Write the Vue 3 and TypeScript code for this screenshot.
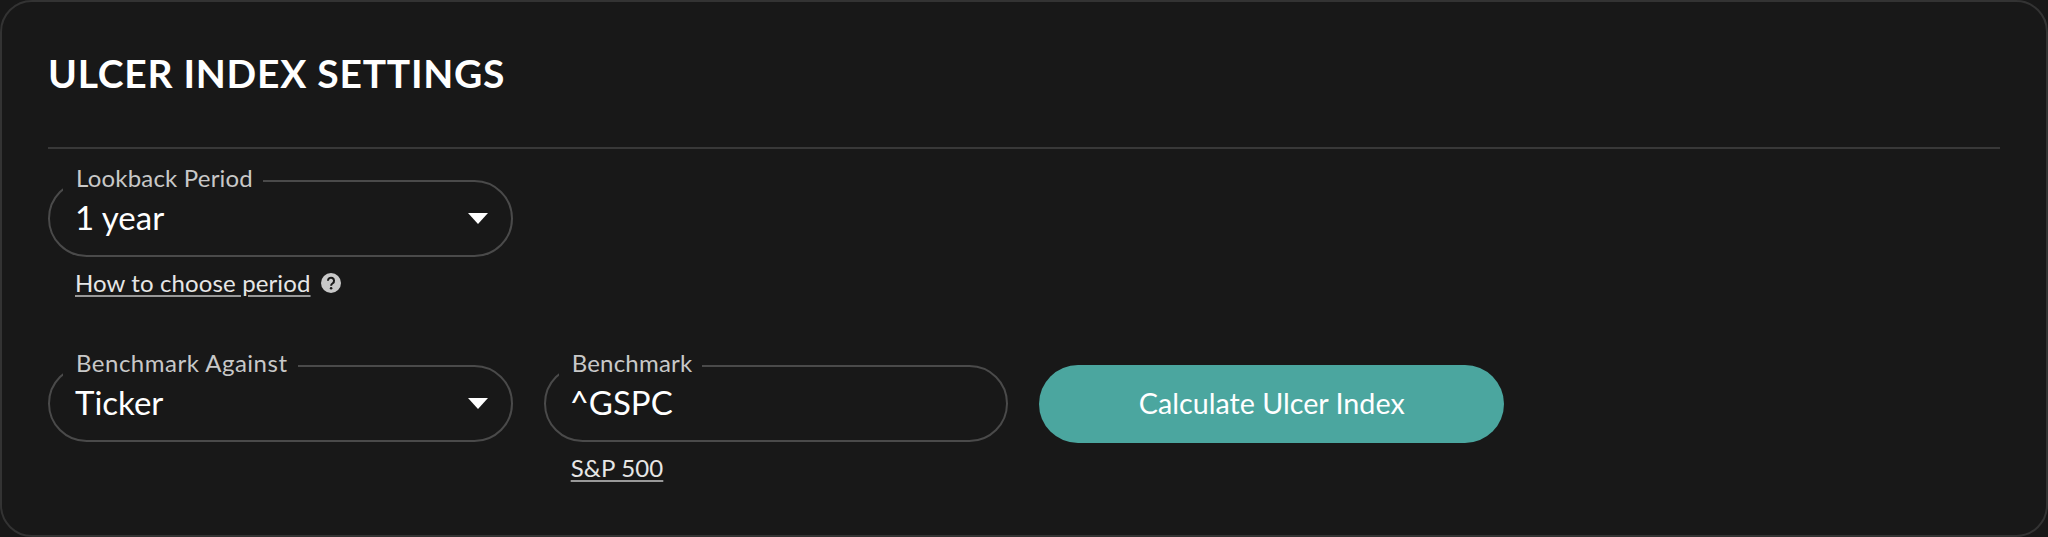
<script setup lang="ts">
const caret = "M0 0H20L10 11Z";
</script>

<template>
  <main class="card">
    <h1 class="title">ULCER INDEX SETTINGS</h1>
    <hr class="divider" />
    <section class="row first">
      <div class="col">
        <div class="field">
          <span class="label">Lookback Period</span>
          <span class="value">1 year</span>
          <svg class="caret" width="20" height="11" viewBox="0 0 20 11"><path :d="caret" fill="#fff" /></svg>
        </div>
        <div class="help">
          <a class="link">How to choose period</a>
          <svg class="q" width="20" height="20" viewBox="0 0 19 19">
            <circle cx="9.5" cy="9.5" r="9.5" fill="#c8c8c8" />
            <path d="M6.6 7.4a2.9 2.9 0 1 1 4.6 2.3c-1 .7-1.6 1.1-1.6 2.3" fill="none" stroke="#181818" stroke-width="1.9" />
            <circle cx="9.6" cy="14.5" r="1.2" fill="#181818" />
          </svg>
        </div>
      </div>
    </section>
    <section class="row second">
      <div class="col">
        <div class="field">
          <span class="label wide">Benchmark Against</span>
          <span class="value">Ticker</span>
          <svg class="caret" width="20" height="11" viewBox="0 0 20 11"><path :d="caret" fill="#fff" /></svg>
        </div>
      </div>
      <div class="col">
        <div class="field">
          <span class="label">Benchmark</span>
          <span class="value gspc">^GSPC</span>
        </div>
        <div class="help"><a class="link">S&amp;P 500</a></div>
      </div>
      <button class="cta" type="button">Calculate Ulcer Index</button>
    </section>
  </main>
</template>

<style>
html, body { margin: 0; background: #181818; }
</style>

<style scoped>
.card {
  box-sizing: border-box;
  width: 2048px;
  height: 537px;
  padding: 48px 46px;
  background: #181818;
  border: 2px solid #333;
  border-radius: 32px;
  font-family: "Lato", "Noto Sans", sans-serif;
  color: #fff;
  overflow: hidden;
}
.title {
  margin: 0;
  padding-top: 1px;
  font-size: 39px;
  line-height: 44px;
  font-weight: 700;
  letter-spacing: 0.75px;
}
.divider {
  height: 2px;
  margin: 52px 0 0;
  border: 0;
  background: #383838;
}
.row { display: flex; align-items: flex-start; }
.first { margin-top: 31px; }
.second { margin-top: 68px; gap: 31px; }
.col { width: 464.7px; }
.field {
  position: relative;
  box-sizing: border-box;
  height: 77px;
  display: flex;
  align-items: center;
  justify-content: space-between;
  padding: 0 23px 0 25px;
  border: 2px solid #4a4a4a;
  border-radius: 39px;
}
.label {
  position: absolute;
  left: 13px;
  top: -18px;
  padding: 0 10px 0 13px;
  background: #181818;
  color: #c8c8c8;
  font-size: 24px;
  line-height: 28px;
  letter-spacing: 0.2px;
  white-space: nowrap;
}
.wide { letter-spacing: 0.5px; }
.value { font-size: 33px; line-height: 40px; padding-bottom: 4px; }
.gspc { margin-left: -1px; }
.help {
  display: flex;
  align-items: center;
  gap: 10px;
  margin: 12px 0 0 27px;
  height: 28px;
}
.link {
  font-size: 24px;
  line-height: 28px;
  letter-spacing: 0.12px;
  color: #e6e6e6;
  text-decoration: underline;
  text-underline-offset: 3px;
  text-decoration-color: #999;
}
.cta {
  width: 464.7px;
  height: 78px;
  border: 0;
  border-radius: 39px;
  background: #4ba69f;
  color: #fff;
  font-family: inherit;
  font-size: 28.7px;
  padding: 0 0 2px;
}
</style>
